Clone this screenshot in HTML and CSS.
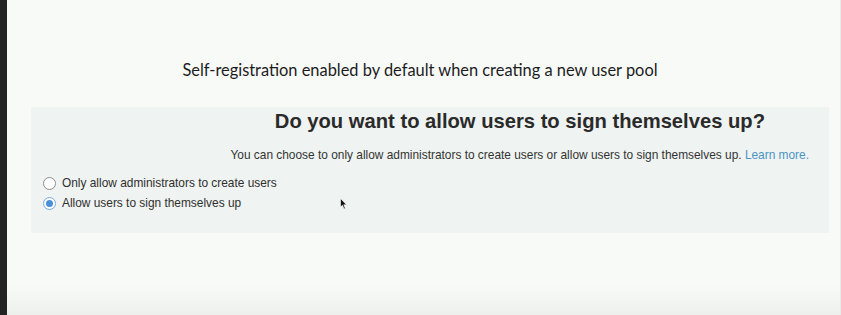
FILE: index.html
```html
<!DOCTYPE html>
<html>
<head>
<meta charset="utf-8">
<link rel="stylesheet" href="styles.css">
</head>
<body>
<div class="frame">
  <div class="strip"></div>
  <div class="page">
    <p class="caption">Self-registration enabled by default when creating a new user pool</p>
    <section class="panel">
      <div class="intro">
        <h2 class="heading">Do you want to allow users to sign themselves up?</h2>
        <p class="desc">You can choose to only allow administrators to create users or allow users to sign themselves up. <a class="link" href="#">Learn more.</a></p>
      </div>
      <div class="options">
        <label class="option"><span class="radio"></span>Only allow administrators to create users</label>
        <label class="option"><span class="radio checked"></span>Allow users to sign themselves up</label>
      </div>
      <svg class="cursor" width="8" height="12" viewBox="0 0 8 12"><path d="M0.5 0.5 L0.5 9 L2.5 7.2 L4 11 L5.3 10.4 L3.8 6.8 L6.5 6.8 Z" fill="#111" stroke="#fff" stroke-width="0.6"/></svg>
    </section>
  </div>
</div>
</body>
</html>
```
FILE: styles.css
```css
* { box-sizing: border-box; }
html, body { margin: 0; padding: 0; }
body { width: 841px; height: 315px; overflow: hidden; background: #f8faf8; }
.frame { display: flex; height: 315px; }
.strip { width: 7px; background: #232323; flex: none; }
.page {
  flex: 1;
  background: linear-gradient(to bottom, #f8faf8 0, #f8faf8 285px, #eef0ee 315px);
  border-right: 1px solid #e8ebe8;
  padding: 0 0 0 24px;
  position: relative;
}
.caption {
  margin: 60px 0 0 -31px;
  text-align: center;
  font-family: "Lato", "Liberation Sans", sans-serif;
  font-size: 16.4px;
  color: #1c1c1c;
  line-height: 20px;
}
.panel {
  position: relative;
  margin-top: 27px;
  width: 798px;
  height: 126px;
  background: #eff3f1;
  padding: 1px 0 0 12px;
  font-family: "Liberation Sans", Arial, sans-serif;
}
.intro { display: flex; flex-direction: column; align-items: flex-end; padding-right: 20px; }
.heading {
  margin: 0 44px 0 0;
  font-size: 20.2px;
  font-weight: bold;
  color: #2a2a2a;
  line-height: 26px;
}
.desc {
  margin: 13px 0 0 0;
  font-size: 11.9px;
  color: #333;
  line-height: 16px;
}
.link { color: #4a93c4; text-decoration: none; }
.options { display: flex; flex-direction: column; gap: 6px; margin-top: 13px; }
.option {
  display: flex; align-items: center; gap: 6px;
  font-size: 11.9px; color: #2f2f2f; line-height: 14px;
}
.radio {
  width: 13px; height: 13px; border-radius: 50%;
  border: 1px solid #8d8d8d; background: #fff; flex: none;
  position: relative;
}
.radio.checked { border-color: #7aaad6; }
.radio.checked::after {
  content: ""; position: absolute; left: 2px; top: 2px; width: 7px; height: 7px;
  border-radius: 50%; background: #4a90d9;
}
.cursor { position: absolute; left: 309px; top: 91px; }
```
